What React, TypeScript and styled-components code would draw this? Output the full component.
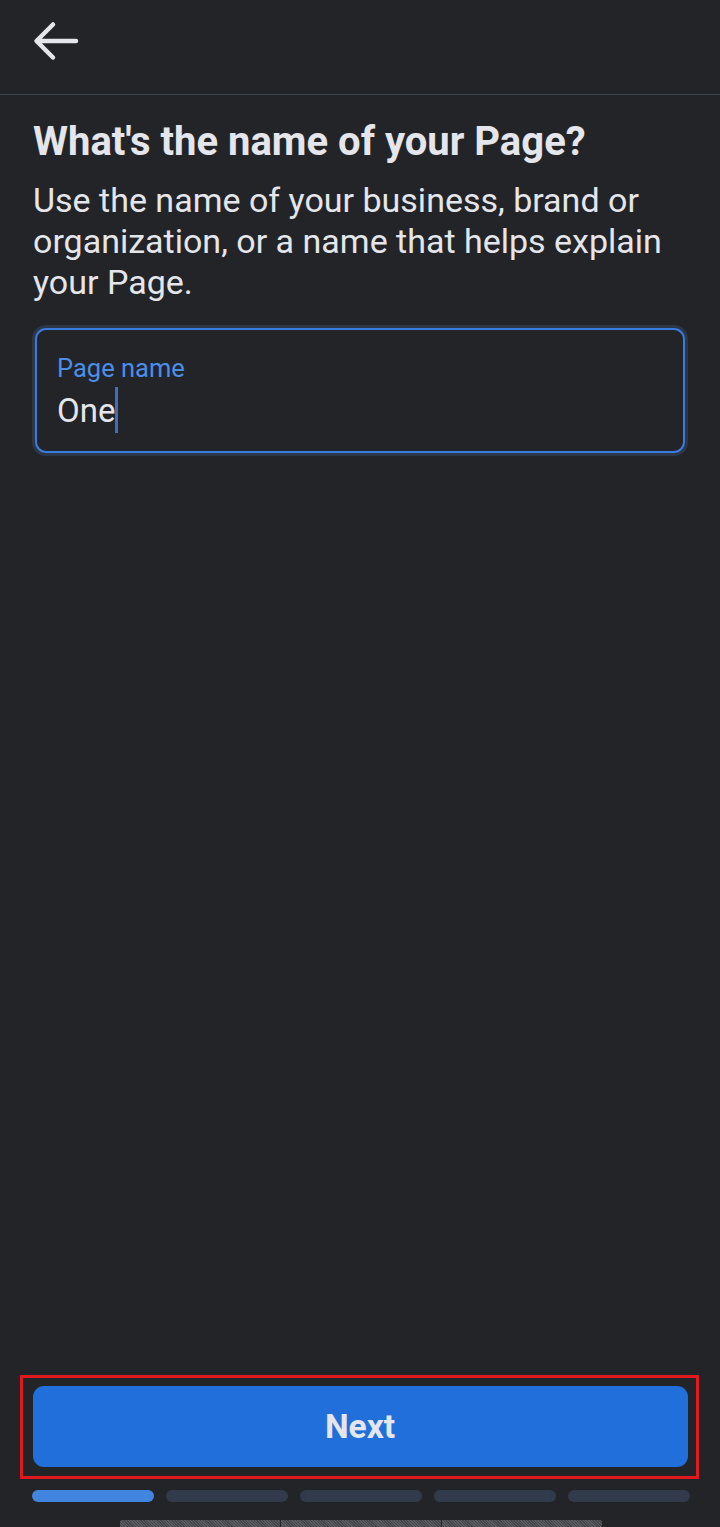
import React from 'react'
import styled, { createGlobalStyle } from 'styled-components'

const GlobalStyle = createGlobalStyle`
  html, body {
    margin: 0;
    padding: 0;
    background: #232428;
  }
  * {
    box-sizing: border-box;
  }
`

const Screen = styled.div`
  width: 720px;
  height: 1527px;
  display: flex;
  flex-direction: column;
  background: #232428;
  color: #e4e6eb;
  font-family: Roboto, 'Noto Sans', sans-serif;
  overflow: hidden;
`

const TopBar = styled.header`
  height: 95px;
  flex-shrink: 0;
  display: flex;
  align-items: center;
  padding-left: 33px;
  border-bottom: 1px solid #3d4350;
`

const BackButton = styled.button`
  width: 48px;
  height: 48px;
  padding: 0;
  border: none;
  background: none;
  display: flex;
  align-items: center;
  justify-content: flex-start;
  margin-top: -12px;
`

const Main = styled.main`
  flex: 1;
  padding: 0 33px;
`

const Title = styled.h1`
  margin: 23px 0 0;
  font-size: 40px;
  line-height: 48px;
  font-weight: 700;
  color: #e4e6eb;
`

const Subtitle = styled.p`
  margin: 14px 0 0;
  font-size: 34px;
  line-height: 41px;
  font-weight: 400;
  color: #e4e6eb;
`

const Field = styled.label`
  display: flex;
  flex-direction: column;
  margin: 25px 2px 0 2px;
  height: 125px;
  padding: 23px 20px 0 20px;
  border: 2px solid #3a7be0;
  border-radius: 11px;
  box-shadow: 0 0 0 3px #2c3747;
`

const FieldLabel = styled.span`
  font-size: 25.5px;
  line-height: 30px;
  color: #4a8ee8;
`

const FieldValue = styled.span`
  display: flex;
  align-items: center;
  margin-top: 6px;
  font-size: 33px;
  line-height: 44px;
  color: #e4e6eb;
`

const Caret = styled.span`
  display: inline-block;
  width: 3px;
  height: 46px;
  margin-top: -3px;
  background: #3a6fc4;
`

const Footer = styled.footer`
  flex-shrink: 0;
  display: flex;
  flex-direction: column;
  align-items: center;
`

const Highlight = styled.div`
  width: 679px;
  margin-left: -2px;
  padding: 8px 8px 9px 10px;
  border: 3px solid #e0191e;
`

const PrimaryButton = styled.button`
  width: 100%;
  height: 81px;
  border: none;
  border-radius: 11px;
  background: #216fdb;
  color: #e4e6eb;
  font-family: Roboto, 'Noto Sans', sans-serif;
  font-size: 33.5px;
  font-weight: 700;
  cursor: pointer;
`

const Progress = styled.div`
  display: grid;
  grid-template-columns: repeat(5, 1fr);
  gap: 12px;
  width: 658px;
  margin-top: 11px;
  margin-left: 1px;
`

const Step = styled.div<{ $active?: boolean }>`
  height: 12px;
  border-radius: 6px;
  background: ${p => (p.$active ? '#4285e0' : '#323b4b')};
`

const NavStrip = styled.div`
  display: flex;
  width: 482px;
  height: 7px;
  margin-top: 18px;
  margin-left: 1px;
  border-radius: 3px 3px 0 0;
  overflow: hidden;
`

const NavKey = styled.div`
  flex: 1;
  background-color: #4c4d52;
  background-image: repeating-linear-gradient(
    45deg,
    #5b5c61 0 1px,
    #45464b 1px 2px
  );
  & + & {
    border-left: 1px solid #232428;
  }
`

const BackArrow = () => (
  <svg width="46" height="42" viewBox="0 0 46 42" fill="none">
    <path
      d="M43 21H5M20 4.5L3.5 21L20 37.5"
      stroke="#e4e6eb"
      strokeWidth="4.5"
      strokeLinecap="round"
      strokeLinejoin="round"
    />
  </svg>
)

const steps = [true, false, false, false, false]

export default function App() {
  return (
    <>
      <GlobalStyle />
      <Screen>
        <TopBar>
          <BackButton aria-label="Back">
            <BackArrow />
          </BackButton>
        </TopBar>
        <Main>
          <Title>What's the name of your Page?</Title>
          <Subtitle>
            Use the name of your business, brand or organization, or a name that helps explain
            your Page.
          </Subtitle>
          <Field>
            <FieldLabel>Page name</FieldLabel>
            <FieldValue>
              One
              <Caret />
            </FieldValue>
          </Field>
        </Main>
        <Footer>
          <Highlight>
            <PrimaryButton>Next</PrimaryButton>
          </Highlight>
          <Progress>
            {steps.map((active, i) => (
              <Step key={i} $active={active} />
            ))}
          </Progress>
          <NavStrip>
            <NavKey />
            <NavKey />
            <NavKey />
          </NavStrip>
        </Footer>
      </Screen>
    </>
  )
}
